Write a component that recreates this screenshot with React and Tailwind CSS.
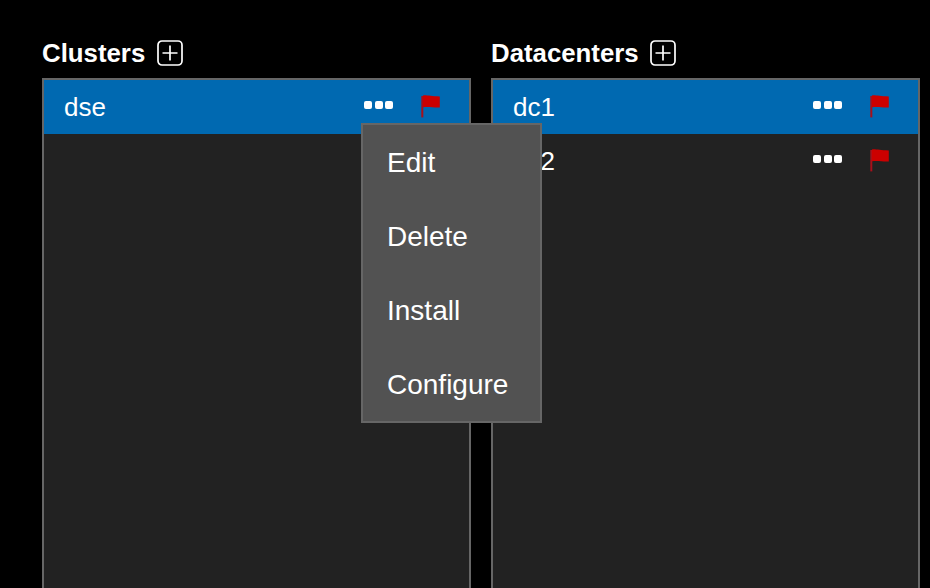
const font = { fontFamily: '"Liberation Sans", Arial, sans-serif' };

function PlusBox() {
  return (
    <svg width="26" height="26" viewBox="0 0 26 26" className="block -translate-y-px">
      <rect x="1" y="1" width="24" height="24" rx="4" fill="none" stroke="white" strokeWidth="1.7" />
      <path d="M13 5.5V20.5M5.5 13H20.5" stroke="white" strokeWidth="1.7" fill="none" />
    </svg>
  );
}

function Dots() {
  return (
    <div className="flex gap-[2.5px] -translate-y-[2px]">
      <span className="w-2 h-2 rounded-[2px] bg-white" />
      <span className="w-2 h-2 rounded-[2px] bg-white" />
      <span className="w-2 h-2 rounded-[2px] bg-white" />
    </div>
  );
}

function Flag() {
  return (
    <svg width="20" height="24" viewBox="0 0 20 24" className="block">
      <path d="M0.3 1H2.3V22.4H0.3Z" fill="#a8101a" />
      <path d="M2 0.4C6 0 10 1.4 18.8 1.4V12.4C13 12.9 8 11.2 2 12.2Z" fill="#cc0000" />
    </svg>
  );
}

function Row({ name, active }) {
  return (
    <div className={`flex items-center pl-5 h-[54px] text-[26px] text-white ${active ? "bg-[#0069b1]" : ""}`}>
      <span className="flex-1">{name}</span>
      <Dots />
      <span className="ml-[28px] mr-[28px]">
        <Flag />
      </span>
    </div>
  );
}

function Panel({ title, children }) {
  return (
    <div className="w-[429px] flex flex-col">
      <div className="flex items-center gap-[11.5px] h-[30px] mb-[9px]">
        <h2 className="text-[25.8px] font-bold text-white leading-none">{title}</h2>
        <PlusBox />
      </div>
      <div className="flex-1 border-2 border-[#666666] bg-[#222222]">{children}</div>
    </div>
  );
}

const menuItems = ["Edit", "Delete", "Install", "Configure"];

export default function App() {
  return (
    <div className="relative h-[588px] w-[930px] overflow-hidden bg-black pt-[39px] pl-[42px]" style={font}>
      <div className="flex gap-[20px] h-[640px]">
        <Panel title="Clusters">
          <Row name="dse" active />
        </Panel>
        <Panel title="Datacenters">
          <Row name="dc1" active />
          <Row name="dc2" />
        </Panel>
      </div>
      <div className="absolute left-[361px] top-[123px] w-[181px] h-[300px] border-2 border-[#666666] bg-[#525252] pt-px">
        {menuItems.map((item) => (
          <div key={item} className="h-[74px] flex items-center pl-[24px] text-[28px] text-white">
            {item}
          </div>
        ))}
      </div>
    </div>
  );
}
